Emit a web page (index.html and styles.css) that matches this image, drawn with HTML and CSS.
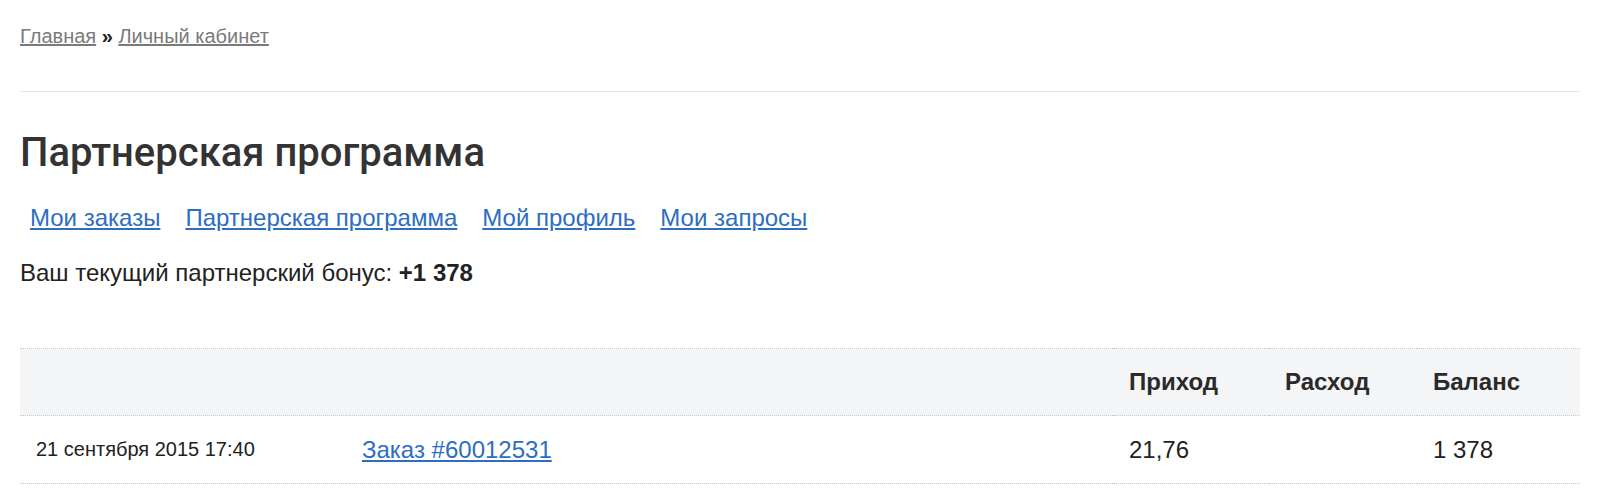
FILE: index.html
```html
<!DOCTYPE html>
<html lang="ru">
<head>
<meta charset="utf-8">
<title>Партнерская программа</title>
<link rel="stylesheet" href="styles.css">
</head>
<body>
<div class="page">
  <div class="breadcrumbs">
    <a href="#">Главная</a> <span class="sep">»</span> <a href="#">Личный кабинет</a>
  </div>
  <div class="rule"></div>
  <h1 class="title">Партнерская программа</h1>
  <nav class="menu">
    <a href="#">Мои заказы</a>
    <a href="#">Партнерская программа</a>
    <a href="#">Мой профиль</a>
    <a href="#">Мои запросы</a>
  </nav>
  <p class="bonus">Ваш текущий партнерский бонус: <b>+1 378</b></p>
  <table class="ledger">
    <colgroup>
      <col class="c-date">
      <col class="c-order">
      <col class="c-in">
      <col class="c-out">
      <col class="c-bal">
    </colgroup>
    <thead>
      <tr>
        <th></th>
        <th></th>
        <th>Приход</th>
        <th>Расход</th>
        <th>Баланс</th>
      </tr>
    </thead>
    <tbody>
      <tr>
        <td class="date">21 сентября 2015 17:40</td>
        <td><a href="#">Заказ #60012531</a></td>
        <td>21,76</td>
        <td></td>
        <td>1 378</td>
      </tr>
    </tbody>
  </table>
</div>
</body>
</html>
```

FILE: styles.css
```css
html, body {
  margin: 0;
  padding: 0;
  background: #fff;
}

body {
  font-family: "Liberation Sans", Arial, sans-serif;
  color: #222;
}

.page {
  padding: 0 20px 0 20px;
}

.breadcrumbs {
  padding-top: 24px;
  font-size: 20px;
  line-height: 24px;
  color: #222;
}

.breadcrumbs a {
  color: #7a7a7a;
  text-decoration: underline;
}

.breadcrumbs .sep {
  font-weight: bold;
  color: #222;
}

.rule {
  margin-top: 43px;
  border-top: 1px solid #e6e6e6;
}

.title {
  margin: 37px 0 0;
  font-family: Roboto, "Open Sans", sans-serif;
  font-weight: 500;
  font-size: 40px;
  line-height: 48px;
  color: #333;
}

.menu {
  margin-top: 27px;
  padding-left: 10px;
  font-size: 24px;
  line-height: 28px;
  display: flex;
  gap: 25px;
}

.menu a {
  color: #2d6dc2;
  text-decoration: underline;
}

.bonus {
  margin: 27px 0 0;
  font-size: 24px;
  line-height: 28px;
  color: #222;
}

.ledger {
  margin-top: 61px;
  width: 100%;
  border-collapse: collapse;
  table-layout: fixed;
}

.c-date { width: 326px; }
.c-order { width: 767px; }
.c-in { width: 156px; }
.c-out { width: 148px; }
.c-bal { width: auto; }

.ledger th,
.ledger td {
  padding: 0 0 0 16px;
  text-align: left;
  border-bottom: 1px dotted #c8c8c8;
}

.ledger th {
  height: 66px;
  font-size: 24px;
  font-weight: bold;
  color: #2a2a2a;
}

.ledger td {
  height: 67px;
  font-size: 24px;
  color: #222;
}

.ledger thead tr {
  background: #f4f5f7;
  border-top: 1px dotted #c8c8c8;
}

.ledger td.date {
  font-size: 20px;
}

.ledger td a {
  color: #2d6dc2;
  text-decoration: underline;
}
```
